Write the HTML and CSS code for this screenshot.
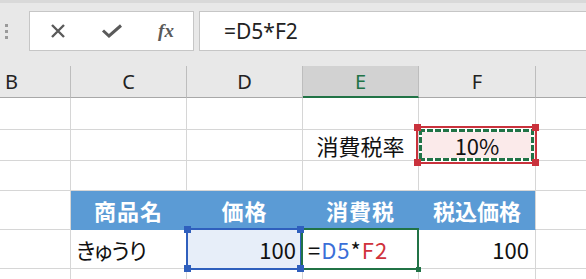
FILE: index.html
```html
<!DOCTYPE html>
<html lang="ja">
<head>
  <meta charset="UTF-8">
  <meta name="viewport" content="width=device-width, initial-scale=1.0">
  <title>消費税の計算</title>
  <link rel="stylesheet" href="styles.css">
</head>
<body>
  <!-- 数式バー -->
  <div class="formula-bar">
    <div class="grip"><span></span><span></span><span></span></div>
    <div class="buttons">
      <span class="slot">
        <svg width="16" height="14" viewBox="0 0 16 14"><path d="M2 1 L14 13 M14 1 L2 13" stroke="#5a5a5a" stroke-width="2.4" fill="none"/></svg>
      </span>
      <span class="slot">
        <svg width="22" height="14" viewBox="0 0 22 14"><path d="M2 6.5 L8 12 L20 1.5" stroke="#5a5a5a" stroke-width="3" fill="none"/></svg>
      </span>
      <span class="slot fx">fx</span>
    </div>
    <div class="formula">=D5*F2</div>
  </div>

  <!-- シート -->
  <div class="sheet">
    <div class="col-head left">B</div>
    <div class="col-head">C</div>
    <div class="col-head">D</div>
    <div class="col-head active">E</div>
    <div class="col-head">F</div>
    <div class="col-head">G</div>

    <div class="cell"></div><div class="cell"></div><div class="cell"></div><div class="cell"></div><div class="cell"></div><div class="cell"></div>

    <div class="cell"></div><div class="cell"></div><div class="cell"></div>
    <div class="cell center">消費税率</div>
    <div class="cell center ref-red">
      <div class="red-box"><i class="h tl"></i><i class="h tr"></i><i class="h bl"></i><i class="h br"></i><div class="ants"></div></div>
      <span class="val">10%</span>
    </div>
    <div class="cell"></div>

    <div class="cell"></div><div class="cell"></div><div class="cell"></div><div class="cell"></div><div class="cell"></div><div class="cell"></div>

    <div class="cell"></div>
    <div class="cell th">商品名</div>
    <div class="cell th">価格</div>
    <div class="cell th">消費税</div>
    <div class="cell th last">税込価格</div>
    <div class="cell"></div>

    <div class="cell"></div>
    <div class="cell kana">きゅうり</div>
    <div class="cell right ref-blue">
      <div class="blue-box"><i class="h tl"></i><i class="h tr"></i><i class="h bl"></i><i class="h br"></i></div>
      <span class="val">100</span>
    </div>
    <div class="cell editing">
      <div class="green-box"><i class="h br"></i></div>
      <span class="val">=<span class="c-blue">D5</span>*<span class="c-red">F2</span></span>
    </div>
    <div class="cell right">100</div>
    <div class="cell"></div>

    <div class="cell"></div><div class="cell"></div><div class="cell"></div><div class="cell"></div><div class="cell"></div><div class="cell"></div>
  </div>
</body>
</html>
```

FILE: styles.css
```css
/* 基本設定 */
* {
  box-sizing: border-box;
}
body {
  margin: 0;
  width: 586px;
  height: 279px;
  overflow: hidden;
  background-color: #e8e8e8;
  font-family: "Noto Sans CJK JP", "Noto Sans", sans-serif;
}

/* 数式バー */
.formula-bar {
  height: 66px;
  border-top: 3px solid #d9d9d9;
  padding: 8px 0 15px 0;
  display: flex;
  background-color: #e8e8e8;
}
.grip {
  width: 29px;
  display: flex;
  flex-direction: column;
  justify-content: center;
  gap: 3px;
  padding-left: 5px;
}
.grip span {
  width: 3px;
  height: 3px;
  background-color: #9a9a9a;
}
.buttons {
  width: 165px;
  background-color: #fff;
  border: 1px solid #c6c6c6;
  display: flex;
  align-items: center;
  padding-left: 1px;
}
.slot {
  width: 54px;
  display: flex;
  justify-content: center;
  align-items: center;
}
.fx {
  font-family: "Liberation Serif", serif;
  font-style: italic;
  font-weight: bold;
  font-size: 19px;
  color: #5a5a5a;
}
.formula {
  flex: 1;
  margin-left: 5px;
  background-color: #fff;
  border: 1px solid #c6c6c6;
  border-right: none;
  padding-left: 24px;
  display: flex;
  align-items: center;
  font-family: "Noto Sans", sans-serif;
  font-size: 21px;
  color: #222;
}

/* シートのグリッド */
.sheet {
  display: grid;
  grid-template-columns: 71px 116px 116px 116px 117px 116px;
  grid-template-rows: 32px 32px 31px 30px 39px 39px 20px;
  background-color: #fff;
}
.col-head {
  background-color: #e8e8e8;
  border-right: 1px solid #bdbdbd;
  border-bottom: 1px solid #a8a8a8;
  display: flex;
  align-items: center;
  justify-content: center;
  font-family: "Noto Sans", sans-serif;
  font-size: 20px;
  color: #222;
}
.col-head.left {
  justify-content: flex-start;
  padding-left: 5px;
}
.col-head.active {
  background-color: #d2d2d2;
  border-bottom: 2px solid #217346;
  color: #217346;
}

.cell {
  position: relative;
  border-right: 1px solid #d6d6d6;
  border-bottom: 1px solid #d6d6d6;
  display: flex;
  align-items: center;
  padding: 0 5px;
  font-size: 22px;
  color: #111;
  white-space: nowrap;
}
.center {
  justify-content: center;
}
.right {
  justify-content: flex-end;
  padding-right: 6px;
}
.kana {
  font-feature-settings: "palt";
  letter-spacing: -1px;
}

/* 表の見出し */
.th {
  background-color: #5b9bd5;
  border-right-color: #5b9bd5;
  border-bottom-color: #5b9bd5;
  justify-content: center;
  color: #fff;
  font-weight: bold;
  letter-spacing: 1px;
}
.th.last {
  border-right-color: #d6d6d6;
  letter-spacing: 0;
}

.val {
  position: relative;
}
.editing .val {
  letter-spacing: 1px;
}
.c-blue {
  color: #3a6fd8;
}
.c-red {
  color: #d0323c;
}

/* 参照枠 */
.ref-red {
  background-color: #fbeaea;
}
.red-box {
  position: absolute;
  top: -4px;
  left: -3px;
  right: -2px;
  bottom: -4px;
  border: 2px solid #c9323c;
}
.red-box .h {
  background-color: #c9323c;
}
.ants {
  position: absolute;
  inset: 1px;
  background:
    repeating-linear-gradient(90deg, #217346 0 6px, #fff 6px 8px) top / 100% 3px no-repeat,
    repeating-linear-gradient(90deg, #217346 0 6px, #fff 6px 8px) bottom / 100% 3px no-repeat,
    repeating-linear-gradient(180deg, #217346 0 6px, #fff 6px 8px) left / 3px 100% no-repeat,
    repeating-linear-gradient(180deg, #217346 0 6px, #fff 6px 8px) right / 3px 100% no-repeat;
}

.ref-blue {
  background-color: #e7eef9;
}
.blue-box {
  position: absolute;
  top: -2px;
  left: -1px;
  right: 0;
  bottom: -2px;
  border: 2px solid #2f5fbd;
}
.blue-box .h {
  background-color: #2f5fbd;
}

.green-box {
  position: absolute;
  top: -2px;
  left: -2px;
  right: -1px;
  bottom: -2px;
  border: 2px solid #217346;
}
.green-box .h {
  background-color: #217346;
  width: 5px;
  height: 5px;
  right: -4px;
  bottom: -4px;
}

/* 角のハンドル */
.h {
  position: absolute;
  width: 7px;
  height: 7px;
  z-index: 1;
}
.h.tl { top: -4px; left: -4px; }
.h.tr { top: -4px; right: -4px; }
.h.bl { bottom: -4px; left: -4px; }
.h.br { bottom: -4px; right: -4px; }
```
